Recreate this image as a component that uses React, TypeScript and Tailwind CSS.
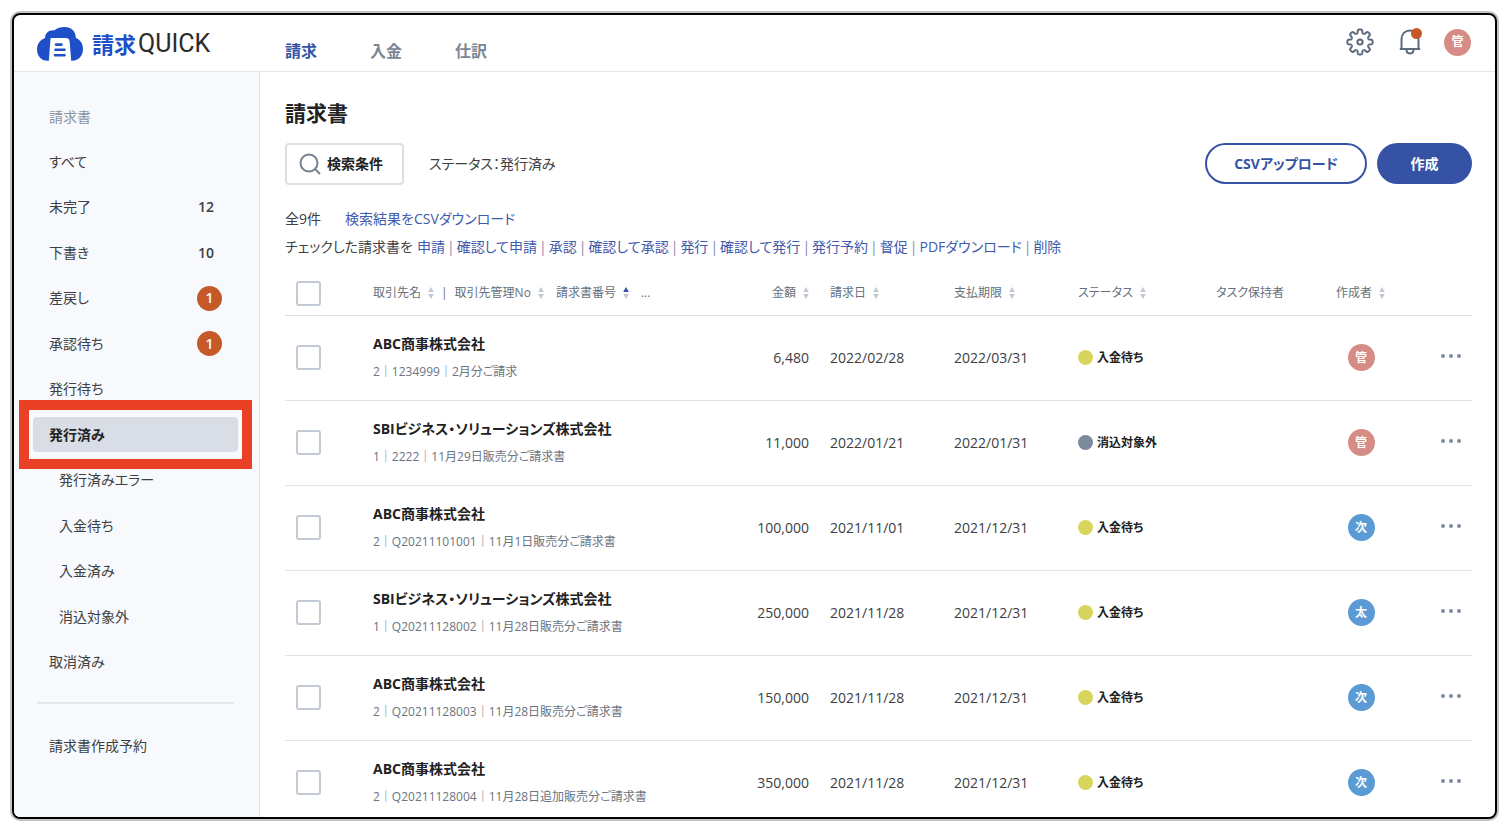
import clsx from 'clsx';

type SortState = 'none' | 'asc';

type MenuItem = {
  title: string;
  count?: number;
  badge?: number;
  sub?: boolean;
  active?: boolean;
};

const tabs = ['請求', '入金', '仕訳'];

const menuItems: MenuItem[] = [
  { title: 'すべて' },
  { title: '未完了', count: 12 },
  { title: '下書き', count: 10 },
  { title: '差戻し', badge: 1 },
  { title: '承認待ち', badge: 1 },
  { title: '発行待ち' },
  { title: '発行済み', active: true },
  { title: '発行済みエラー', sub: true },
  { title: '入金待ち', sub: true },
  { title: '入金済み', sub: true },
  { title: '消込対象外', sub: true },
  { title: '取消済み' },
];

const bulkActions = [
  '申請',
  '確認して申請',
  '承認',
  '確認して承認',
  '発行',
  '確認して発行',
  '発行予約',
  '督促',
  'PDFダウンロード',
  '削除',
];

const avatarColors: Record<string, string> = {
  管: 'bg-[#d58c85]',
  次: 'bg-[#5b9bd5]',
  太: 'bg-[#5b9bd5]',
};

const statusColors: Record<string, string> = {
  入金待ち: 'bg-[#d8d45c]',
  消込対象外: 'bg-[#7b8a9c]',
};

const invoices = [
  { client: 'ABC商事株式会社', detail: '2｜1234999｜2月分ご請求', amount: '6,480', issued: '2022/02/28', due: '2022/03/31', status: '入金待ち', creator: '管' },
  { client: 'SBIビジネス・ソリューションズ株式会社', detail: '1｜2222｜11月29日販売分ご請求書', amount: '11,000', issued: '2022/01/21', due: '2022/01/31', status: '消込対象外', creator: '管' },
  { client: 'ABC商事株式会社', detail: '2｜Q20211101001｜11月1日販売分ご請求書', amount: '100,000', issued: '2021/11/01', due: '2021/12/31', status: '入金待ち', creator: '次' },
  { client: 'SBIビジネス・ソリューションズ株式会社', detail: '1｜Q20211128002｜11月28日販売分ご請求書', amount: '250,000', issued: '2021/11/28', due: '2021/12/31', status: '入金待ち', creator: '太' },
  { client: 'ABC商事株式会社', detail: '2｜Q20211128003｜11月28日販売分ご請求書', amount: '150,000', issued: '2021/11/28', due: '2021/12/31', status: '入金待ち', creator: '次' },
  { client: 'ABC商事株式会社', detail: '2｜Q20211128004｜11月28日追加販売分ご請求書', amount: '350,000', issued: '2021/11/28', due: '2021/12/31', status: '入金待ち', creator: '次' },
];

function Logo() {
  return (
    <a href="#" className="flex w-[249px] shrink-0 items-center gap-2 pt-[2px]">
      <svg width="48" height="36" viewBox="0 0 48 36" aria-hidden="true">
        <path
          d="M11.500 34.800C5 34.800 1 29.500 1 23.500C1 18 4.500 13.500 9 12.300C9 7 13 3.500 18.500 4.300C21 2 25 1 28.500 1C35.500 1 39.800 5.500 39.800 11.800C44.500 14 47 18 47 23C47 29.500 43 34.800 36 34.800Z"
          fill="#1f4fc8"
        />
        <path d="M15.200 12H30C32.500 12 33.500 13.500 33.700 16L35.200 35H12.800L14.500 13C14.500 12.300 14.700 12 15.200 12Z" fill="#fff" />
        <path d="M20 18.600H25.500M19.500 23.800H28.500M19 29.300H28.500" stroke="#1f4fc8" strokeWidth="2.600" strokeLinecap="round" />
      </svg>
      <span className="flex items-center gap-[2px] whitespace-nowrap">
        <span className="text-[22px] font-semibold leading-8 text-[#1f4fc8]">請求</span>
        <span className="font-['Roboto',sans-serif] text-[25px] leading-8 text-[#2b2b2b]">QUICK</span>
      </span>
    </a>
  );
}

const toothAngles = [0, 45, 90, 135, 180, 225, 270, 315];

function GearIcon() {
  return (
    <svg width="28" height="28" viewBox="-14 -14 28 28" fill="none" stroke="#5b6b7c" strokeWidth="2" aria-hidden="true">
      {toothAngles.map((angle) => (
        <path
          key={angle}
          transform={`rotate(${angle})`}
          d="M-3.400 -8.200Q-2.500 -8.500 -2.400 -9.600L-2.200 -11.400Q-2 -12.600 -1 -12.600H1Q2 -12.600 2.200 -11.400L2.400 -9.600Q2.500 -8.500 3.400 -8.200"
        />
      ))}
      <circle r="2.600" />
    </svg>
  );
}

function BellIcon() {
  return (
    <svg width="22" height="26" viewBox="0 0 22 26" fill="none" stroke="#5b6b7c" strokeWidth="2" aria-hidden="true">
      <path d="M2.500 19.500V10C2.500 5 6 1.500 11 1.500C16 1.500 19.500 5 19.500 10V19.500" />
      <path d="M.8 20H21.200M7.500 20.500C7.500 23 9 24.500 11 24.500C13 24.500 14.500 23 14.500 20.500" />
    </svg>
  );
}

function Avatar({ name }: { name: string }) {
  return (
    <span className={clsx('inline-flex size-[27px] items-center justify-center rounded-full text-xs font-bold text-white', avatarColors[name])}>
      {name}
    </span>
  );
}

function SortIcon({ state = 'none' }: { state?: SortState }) {
  return (
    <svg width="6" height="12" viewBox="0 0 6 12" className="shrink-0" aria-hidden="true">
      <path d="M3 0L5.800 5H.2Z" fill={state === 'asc' ? '#3552a5' : '#c0c8d2'} />
      <path d="M3 12L5.800 7H.2Z" fill="#c0c8d2" />
    </svg>
  );
}

function SortButton({ label, state }: { label: string; state?: SortState }) {
  return (
    <button type="button" className="inline-flex items-center gap-[7px] whitespace-nowrap">
      {label}
      <SortIcon state={state} />
    </button>
  );
}

function Checkbox({ label }: { label: string }) {
  return (
    <input
      type="checkbox"
      aria-label={label}
      className="ml-[11px] block size-[25px] appearance-none rounded-[3px] border-2 border-[#c3cad4] bg-white checked:bg-[#3552a5]"
    />
  );
}

function Header() {
  return (
    <header className="flex h-[57px] shrink-0 items-center border-b border-[#e3e6ec] pl-[22px] pr-6">
      <Logo />
      <nav className="flex gap-[53px] pt-4">
        {tabs.map((tab, i) => (
          <a key={tab} href="#" className={clsx('text-base font-bold', i === 0 ? 'text-[#3552a5]' : 'text-[#7b8794]')}>
            {tab}
          </a>
        ))}
      </nav>
      <div className="ml-auto flex items-center pb-[2px]">
        <button type="button" aria-label="設定">
          <GearIcon />
        </button>
        <button type="button" aria-label="お知らせ" className="relative ml-[25px]">
          <BellIcon />
          <span className="absolute -top-px left-3 size-[11px] rounded-full bg-[#c55a28]" />
        </button>
        <button type="button" aria-label="アカウント" className="ml-[23px] flex">
          <Avatar name="管" />
        </button>
      </div>
    </header>
  );
}

function Sidebar() {
  return (
    <aside className="w-[246px] shrink-0 border-r border-[#dfe3ea] bg-[#f7f9fc] pt-[35px]">
      <h2 className="pl-[35px] text-sm text-[#8b94a0]">請求書</h2>
      <ul className="ml-[19px] mr-[21px] mt-[17px] flex h-[536px] flex-col justify-between">
        {menuItems.map((item) => (
          <li key={item.title} className="relative">
            <a
              href="#"
              className={clsx(
                'flex h-[35px] items-center justify-between rounded',
                item.sub ? 'pl-[26px]' : 'pl-4',
                item.badge ? 'pr-4' : 'pr-6',
                item.active && 'bg-[#d9dde6] font-bold text-[#222]',
              )}
            >
              {item.title}
              {item.count && <span className="font-semibold">{item.count}</span>}
              {item.badge && (
                <span className="flex size-[25px] items-center justify-center rounded-full bg-[#c55a28] font-semibold text-white">
                  {item.badge}
                </span>
              )}
            </a>
            {item.active && (
              <span className="pointer-events-none absolute -inset-x-[14px] -inset-y-[17px] border-10 border-[#ea4025]" />
            )}
          </li>
        ))}
      </ul>
      <hr className="ml-[23px] mr-[25px] mt-[22px] border-t-2 border-[#e3e6eb]" />
      <a href="#" className="mt-8 block pl-[35px]">
        請求書作成予約
      </a>
    </aside>
  );
}

function InvoiceTable() {
  return (
    <table className="mt-[15px] w-full table-fixed border-collapse text-left">
      <colgroup>
        <col className="w-[88px]" />
        <col />
        <col className="w-[110px]" />
        <col className="w-[124px]" />
        <col className="w-[124px]" />
        <col className="w-[138px]" />
        <col className="w-[120px]" />
        <col className="w-[50px]" />
        <col className="w-[86px]" />
      </colgroup>
      <thead>
        <tr className="h-[43px] border-b border-[#d9dee7] text-xs text-[#66707c] *:font-normal">
          <th>
            <Checkbox label="すべて選択" />
          </th>
          <th>
            <div className="flex items-center whitespace-nowrap">
              <SortButton label="取引先名" />
              <span className="mx-[7px]">|</span>
              <SortButton label="取引先管理No" />
              <span className="ml-3 flex">
                <SortButton label="請求書番号" state="asc" />
              </span>
              <span className="ml-3">...</span>
            </div>
          </th>
          <th className="pr-[21px] text-right">
            <SortButton label="金額" />
          </th>
          <th>
            <SortButton label="請求日" />
          </th>
          <th>
            <SortButton label="支払期限" />
          </th>
          <th>
            <SortButton label="ステータス" />
          </th>
          <th>タスク保持者</th>
          <th>
            <SortButton label="作成者" />
          </th>
          <th />
        </tr>
      </thead>
      <tbody>
        {invoices.map((inv, i) => (
          <tr key={i} className="h-[85px] border-b border-[#dfe3ea] last:border-b-0">
            <td>
              <Checkbox label={`${inv.client} ${inv.amount}`} />
            </td>
            <td className="whitespace-nowrap">
              <div className="font-bold leading-5 text-[#222]">{inv.client}</div>
              <div className="mt-2 text-xs leading-5 text-[#6b7480]">{inv.detail}</div>
            </td>
            <td className="pr-[21px] text-right">{inv.amount}</td>
            <td>{inv.issued}</td>
            <td>{inv.due}</td>
            <td>
              <span className="flex items-center gap-1 text-xs font-bold text-[#222]">
                <span className={clsx('size-[15px] rounded-full', statusColors[inv.status])} />
                {inv.status}
              </span>
            </td>
            <td />
            <td className="text-center">
              <Avatar name={inv.creator} />
            </td>
            <td>
              <button type="button" aria-label="メニュー" className="mb-1 ml-auto mr-[11px] flex gap-1">
                <span className="size-1 rounded-full bg-[#7b8a9c]" />
                <span className="size-1 rounded-full bg-[#7b8a9c]" />
                <span className="size-1 rounded-full bg-[#7b8a9c]" />
              </button>
            </td>
          </tr>
        ))}
      </tbody>
    </table>
  );
}

export default function App() {
  return (
    <div className="flex h-screen flex-col bg-white pb-[13px] pl-[10px] pr-[11px] pt-[11px] font-['Open_Sans','Noto_Sans_CJK_JP',sans-serif] text-sm text-[#3c4043] [font-feature-settings:'palt']">
      <div className="flex min-h-0 flex-1 flex-col rounded-[10px] border-2 border-[#c4c4c4]">
        <div className="flex min-h-0 flex-1 flex-col overflow-hidden rounded-lg border-2 border-black">
          <Header />
          <div className="flex min-h-0 flex-1">
            <Sidebar />
            <main className="min-w-0 flex-1 overflow-hidden pl-[25px] pr-[23px] pt-[27px]">
              <h1 className="text-[21px] font-bold leading-7 text-[#222]">請求書</h1>
              <div className="mt-4 flex items-start">
                <button
                  type="button"
                  className="flex h-[42px] w-[119px] items-center gap-[6px] rounded border-2 border-[#dce0e6] pl-3 font-bold text-[#222]"
                >
                  <svg width="22" height="22" viewBox="0 0 22 22" fill="none" stroke="#76828f" strokeWidth="2" aria-hidden="true">
                    <circle cx="10" cy="10" r="8.500" />
                    <path d="M16 16L21 21" />
                  </svg>
                  検索条件
                </button>
                <p className="ml-[25px] leading-[42px]">ステータス：発行済み</p>
                <button
                  type="button"
                  className="ml-auto h-[41px] w-[162px] rounded-full border-2 border-[#3552a5] font-bold text-[#3552a5]"
                >
                  CSVアップロード
                </button>
                <button type="button" className="ml-[10px] h-[41px] w-[95px] rounded-full bg-[#3552a5] font-bold text-white">
                  作成
                </button>
              </div>
              <div className="mt-6 flex gap-6 leading-5">
                <span>全9件</span>
                <a href="#" className="text-[#3f5bab]">
                  検索結果をCSVダウンロード
                </a>
              </div>
              <div className="mt-2 flex whitespace-nowrap leading-5">
                <span className="mr-1">チェックした請求書を</span>
                {bulkActions.map((action, i) => (
                  <span key={action} className="flex text-[#3f5bab]">
                    {i > 0 && <span className="mx-[2px] text-[#8a86a8]">|</span>}
                    <a href="#">{action}</a>
                  </span>
                ))}
              </div>
              <InvoiceTable />
            </main>
          </div>
        </div>
      </div>
    </div>
  );
}
